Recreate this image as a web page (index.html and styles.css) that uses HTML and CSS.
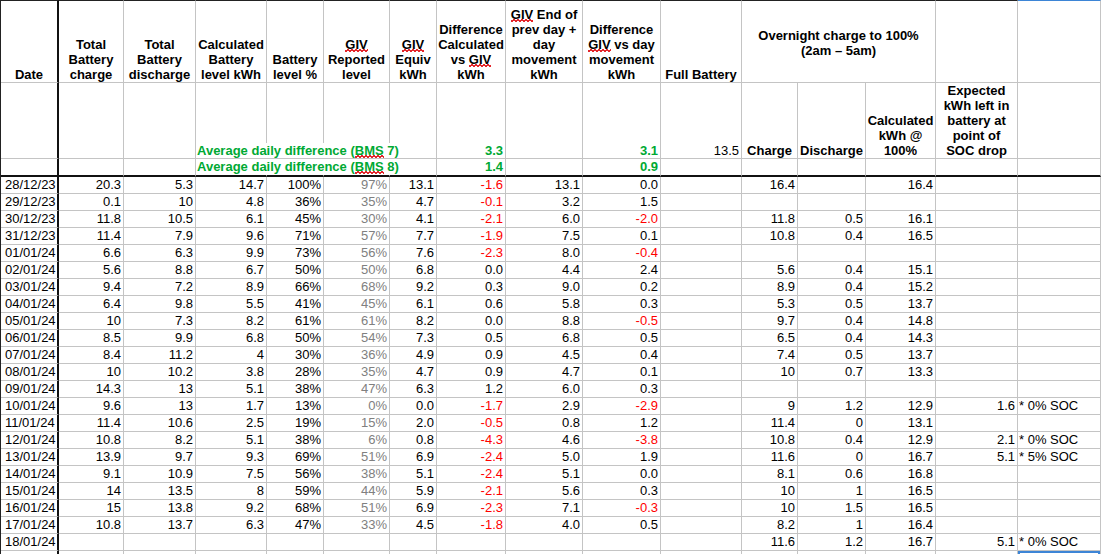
FILE: index.html
```html
<!DOCTYPE html>
<html>
<head>
<meta charset="utf-8">
<link rel="stylesheet" href="styles.css">
</head>
<body>
<div class="sheet">
  <div class="row hr1">
    <div class="h"><div>Date</div></div>
    <div class="h"><div>Total<br>Battery<br>charge</div></div>
    <div class="h"><div>Total<br>Battery<br>discharge</div></div>
    <div class="h"><div>Calculated<br>Battery<br>level kWh</div></div>
    <div class="h"><div>Battery<br>level %</div></div>
    <div class="h"><div><span class="zz">GIV</span><br>Reported<br>level</div></div>
    <div class="h"><div><span class="zz">GIV</span><br>Equiv<br>kWh</div></div>
    <div class="h"><div>Difference<br>Calculated<br>vs <span class="zz">GIV</span><br>kWh</div></div>
    <div class="h"><div><span class="zz">GIV</span> End of<br>prev day +<br>day<br>movement<br>kWh</div></div>
    <div class="h"><div>Difference<br><span class="zz">GIV</span> vs day<br>movement<br>kWh</div></div>
    <div class="h"><div>Full Battery</div></div>
    <div class="h mid span3"><div>Overnight charge to 100%<br>(2am – 5am)</div></div>
    <div class="h"></div>
    <div class="h sel-top"></div>
  </div>
  <div class="row hr2">
    <div></div><div></div><div></div>
    <div class="avg"><span class="lbl">Average daily difference (<span class="zz">BMS</span> 7)</span></div>
    <div></div><div></div><div></div>
    <div class="num grn">3.3</div>
    <div></div>
    <div class="num grn">3.1</div>
    <div class="num">13.5</div>
    <div class="h"><div>Charge</div></div>
    <div class="h"><div>Discharge</div></div>
    <div class="h"><div>Calculated<br>kWh @<br>100%</div></div>
    <div class="h"><div>Expected<br>kWh left in<br>battery at<br>point of<br>SOC drop</div></div>
    <div></div>
  </div>
  <div class="row hr3">
    <div></div><div></div><div></div>
    <div class="avg"><span class="lbl">Average daily difference (<span class="zz">BMS</span> 8)</span></div>
    <div></div><div></div><div></div>
    <div class="num grn">1.4</div>
    <div></div>
    <div class="num grn">0.9</div>
    <div></div><div></div><div></div><div></div><div></div><div></div>
  </div>

  <div class="row d"><div>28/12/23</div><div>20.3</div><div>5.3</div><div>14.7</div><div>100%</div><div>97%</div><div>13.1</div><div class="n">-1.6</div><div>13.1</div><div>0.0</div><div></div><div>16.4</div><div></div><div>16.4</div><div></div><div></div></div>
  <div class="row d"><div>29/12/23</div><div>0.1</div><div>10</div><div>4.8</div><div>36%</div><div>35%</div><div>4.7</div><div class="n">-0.1</div><div>3.2</div><div>1.5</div><div></div><div></div><div></div><div></div><div></div><div></div></div>
  <div class="row d"><div>30/12/23</div><div>11.8</div><div>10.5</div><div>6.1</div><div>45%</div><div>30%</div><div>4.1</div><div class="n">-2.1</div><div>6.0</div><div class="n">-2.0</div><div></div><div>11.8</div><div>0.5</div><div>16.1</div><div></div><div></div></div>
  <div class="row d"><div>31/12/23</div><div>11.4</div><div>7.9</div><div>9.6</div><div>71%</div><div>57%</div><div>7.7</div><div class="n">-1.9</div><div>7.5</div><div>0.1</div><div></div><div>10.8</div><div>0.4</div><div>16.5</div><div></div><div></div></div>
  <div class="row d"><div>01/01/24</div><div>6.6</div><div>6.3</div><div>9.9</div><div>73%</div><div>56%</div><div>7.6</div><div class="n">-2.3</div><div>8.0</div><div class="n">-0.4</div><div></div><div></div><div></div><div></div><div></div><div></div></div>
  <div class="row d"><div>02/01/24</div><div>5.6</div><div>8.8</div><div>6.7</div><div>50%</div><div>50%</div><div>6.8</div><div>0.0</div><div>4.4</div><div>2.4</div><div></div><div>5.6</div><div>0.4</div><div>15.1</div><div></div><div></div></div>
  <div class="row d"><div>03/01/24</div><div>9.4</div><div>7.2</div><div>8.9</div><div>66%</div><div>68%</div><div>9.2</div><div>0.3</div><div>9.0</div><div>0.2</div><div></div><div>8.9</div><div>0.4</div><div>15.2</div><div></div><div></div></div>
  <div class="row d"><div>04/01/24</div><div>6.4</div><div>9.8</div><div>5.5</div><div>41%</div><div>45%</div><div>6.1</div><div>0.6</div><div>5.8</div><div>0.3</div><div></div><div>5.3</div><div>0.5</div><div>13.7</div><div></div><div></div></div>
  <div class="row d"><div>05/01/24</div><div>10</div><div>7.3</div><div>8.2</div><div>61%</div><div>61%</div><div>8.2</div><div>0.0</div><div>8.8</div><div class="n">-0.5</div><div></div><div>9.7</div><div>0.4</div><div>14.8</div><div></div><div></div></div>
  <div class="row d"><div>06/01/24</div><div>8.5</div><div>9.9</div><div>6.8</div><div>50%</div><div>54%</div><div>7.3</div><div>0.5</div><div>6.8</div><div>0.5</div><div></div><div>6.5</div><div>0.4</div><div>14.3</div><div></div><div></div></div>
  <div class="row d"><div>07/01/24</div><div>8.4</div><div>11.2</div><div>4</div><div>30%</div><div>36%</div><div>4.9</div><div>0.9</div><div>4.5</div><div>0.4</div><div></div><div>7.4</div><div>0.5</div><div>13.7</div><div></div><div></div></div>
  <div class="row d"><div>08/01/24</div><div>10</div><div>10.2</div><div>3.8</div><div>28%</div><div>35%</div><div>4.7</div><div>0.9</div><div>4.7</div><div>0.1</div><div></div><div>10</div><div>0.7</div><div>13.3</div><div></div><div></div></div>
  <div class="row d"><div>09/01/24</div><div>14.3</div><div>13</div><div>5.1</div><div>38%</div><div>47%</div><div>6.3</div><div>1.2</div><div>6.0</div><div>0.3</div><div></div><div></div><div></div><div></div><div></div><div></div></div>
  <div class="row d"><div>10/01/24</div><div>9.6</div><div>13</div><div>1.7</div><div>13%</div><div>0%</div><div>0.0</div><div class="n">-1.7</div><div>2.9</div><div class="n">-2.9</div><div></div><div>9</div><div>1.2</div><div>12.9</div><div>1.6</div><div>* 0% SOC</div></div>
  <div class="row d"><div>11/01/24</div><div>11.4</div><div>10.6</div><div>2.5</div><div>19%</div><div>15%</div><div>2.0</div><div class="n">-0.5</div><div>0.8</div><div>1.2</div><div></div><div>11.4</div><div>0</div><div>13.1</div><div></div><div></div></div>
  <div class="row d"><div>12/01/24</div><div>10.8</div><div>8.2</div><div>5.1</div><div>38%</div><div>6%</div><div>0.8</div><div class="n">-4.3</div><div>4.6</div><div class="n">-3.8</div><div></div><div>10.8</div><div>0.4</div><div>12.9</div><div>2.1</div><div>* 0% SOC</div></div>
  <div class="row d"><div>13/01/24</div><div>13.9</div><div>9.7</div><div>9.3</div><div>69%</div><div>51%</div><div>6.9</div><div class="n">-2.4</div><div>5.0</div><div>1.9</div><div></div><div>11.6</div><div>0</div><div>16.7</div><div>5.1</div><div>* 5% SOC</div></div>
  <div class="row d"><div>14/01/24</div><div>9.1</div><div>10.9</div><div>7.5</div><div>56%</div><div>38%</div><div>5.1</div><div class="n">-2.4</div><div>5.1</div><div>0.0</div><div></div><div>8.1</div><div>0.6</div><div>16.8</div><div></div><div></div></div>
  <div class="row d"><div>15/01/24</div><div>14</div><div>13.5</div><div>8</div><div>59%</div><div>44%</div><div>5.9</div><div class="n">-2.1</div><div>5.6</div><div>0.3</div><div></div><div>10</div><div>1</div><div>16.5</div><div></div><div></div></div>
  <div class="row d"><div>16/01/24</div><div>15</div><div>13.8</div><div>9.2</div><div>68%</div><div>51%</div><div>6.9</div><div class="n">-2.3</div><div>7.1</div><div class="n">-0.3</div><div></div><div>10</div><div>1.5</div><div>16.5</div><div></div><div></div></div>
  <div class="row d"><div>17/01/24</div><div>10.8</div><div>13.7</div><div>6.3</div><div>47%</div><div>33%</div><div>4.5</div><div class="n">-1.8</div><div>4.0</div><div>0.5</div><div></div><div>8.2</div><div>1</div><div>16.4</div><div></div><div></div></div>
  <div class="row d"><div>18/01/24</div><div></div><div></div><div></div><div></div><div></div><div></div><div></div><div></div><div></div><div></div><div>11.6</div><div>1.2</div><div>16.7</div><div>5.1</div><div>* 0% SOC</div></div>
  <div class="row d last"><div></div><div></div><div></div><div></div><div></div><div></div><div></div><div></div><div></div><div></div><div></div><div></div><div></div><div></div><div></div><div class="sel-bot"></div></div>
</div>
</body>
</html>
```
FILE: styles.css
```css
html, body {
  margin: 0;
  padding: 0;
  background: #fff;
}

body {
  width: 1101px;
  height: 554px;
  overflow: hidden;
  font-family: "Liberation Sans", Arial, sans-serif;
  font-size: 13px;
  color: #000;
}

.sheet {
  display: grid;
  grid-template-columns: 58px 65px 72px 71px 57px 66px 47px 69px 77px 78px 81px 56px 68px 70px 82px 83px;
  grid-template-rows: 83px 76px 18px repeat(23, 17px);
  border-left: 1px solid #222;
}

.row {
  display: contents;
}

.row > div {
  box-sizing: border-box;
  border-right: 1px solid #c4c4c4;
  border-bottom: 1px solid #c4c4c4;
  white-space: nowrap;
  min-width: 0;
}

.row > div:first-child {
  border-right: 2px solid #111;
}

/* header rows */
.hr1 > div {
  border-top: 1px solid #222;
}

.hr1 > .sel-top {
  border-top-color: #3d85d6;
}

.hr3 > div {
  border-bottom: 2px solid #111;
}

.h {
  display: flex;
  flex-direction: column;
  justify-content: flex-end;
  text-align: center;
  font-weight: bold;
  line-height: 15px;
}

.h.mid {
  justify-content: center;
  padding-top: 2px;
}

.span3 {
  grid-column: span 3;
}

/* spell-check squiggle */
.zz {
  background-image:
    linear-gradient(135deg, transparent 38%, #e3262b 38%, #e3262b 62%, transparent 62%),
    linear-gradient(45deg, transparent 38%, #e3262b 38%, #e3262b 62%, transparent 62%);
  background-size: 4px 3px, 4px 3px;
  background-position: 0 100%, 2px 100%;
  background-repeat: repeat-x;
}

.avg {
  z-index: 1;
  display: flex;
  align-items: flex-end;
  overflow: visible;
}

.lbl {
  background: #fff;
  color: #00a933;
  font-weight: bold;
  line-height: 15px;
  padding-left: 1px;
  padding-right: 1px;
}

.hr3 .lbl {
  line-height: 16px;
}

.num {
  display: flex;
  align-items: flex-end;
  justify-content: flex-end;
  line-height: 15px;
  padding-right: 2px;
}

.hr3 .num {
  line-height: 16px;
}

.grn {
  color: #00a933;
  font-weight: bold;
}

/* data rows */
.d > div {
  line-height: 16px;
  text-align: right;
  padding: 0 2px 0 0;
}

.d > div:first-child {
  text-align: left;
  padding-left: 4px;
}

.d > div:nth-child(6) {
  color: #808080;
}

.d > div:nth-child(16) {
  text-align: left;
  padding-left: 1px;
}

.d > .n {
  color: #ff0000;
}

.sel-bot {
  box-shadow: inset 0 2px 0 #3d85d6, inset 2px 0 0 #3d85d6, inset -2px 0 0 #3d85d6;
}
```
